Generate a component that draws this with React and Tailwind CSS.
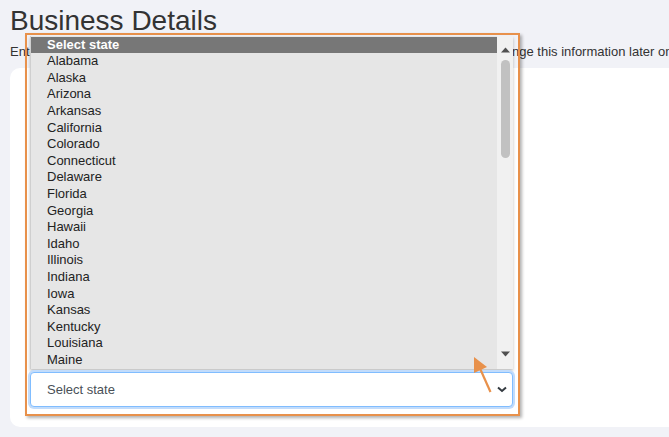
import React from "react";

const states = [
  "Alabama", "Alaska", "Arizona", "Arkansas", "California", "Colorado", "Connecticut",
  "Delaware", "Florida", "Georgia", "Hawaii", "Idaho", "Illinois", "Indiana", "Iowa",
  "Kansas", "Kentucky", "Louisiana", "Maine", "Maryland", "Massachusetts", "Michigan",
];

const App = () => {
  return (
    <div className="relative w-[669px] h-[437px] overflow-hidden bg-[#f1f2f7] font-['Liberation_Sans',Arial,sans-serif] text-[#333]">
      <h1 className="ml-[10px] mt-[7px] text-[28px] leading-[28px] text-[#333]">Business Details</h1>
      <p className="ml-[10px] mt-[9px] text-[13px] leading-[16px] whitespace-nowrap text-[#333]">
        Enter the details of your business below. This will appear on your invoices. You can change this information later on.
      </p>
      <div className="ml-[10px] mt-[8px] w-[700px] h-[359px] rounded-[10px] bg-white" />

      {/* annotated dropdown */}
      <div className="absolute left-[25px] top-[33px] w-[495px] h-[383px] border-2 border-[#e8914b] shadow-[2px_2px_3px_rgba(0,0,0,0.3)]" />

      <div className="absolute left-[30px] top-[36px] w-[483px] h-[333px] flex bg-[#e6e6e6] border-l border-[#cfcfcf] shadow-[0_2px_3px_rgba(0,0,0,0.25)] text-[13px] text-[#222]">
        <ul className="flex-1 overflow-hidden pt-[0.6px]">
          <li className="h-[16.6px] leading-[16.6px] pl-[16px] bg-[#777] text-white font-bold">Select state</li>
          {states.map((s) => (
            <li key={s} className="h-[16.6px] leading-[16.6px] pl-[16px]">
              {s}
            </li>
          ))}
        </ul>
        <div className="w-[16px] bg-[#f1f1f1] flex flex-col items-center">
          <svg width="9" height="6" viewBox="0 0 9 6" className="mt-[11px]">
            <path d="M0 5.5 L4.5 0.5 L9 5.5 Z" fill="#505050" />
          </svg>
          <div className="mt-[7px] w-[9px] h-[98px] rounded-full bg-[#c1c1c1]" />
          <div className="flex-1" />
          <svg width="9" height="6" viewBox="0 0 9 6" className="mb-[12px]">
            <path d="M0 0.5 L9 0.5 L4.5 5.5 Z" fill="#505050" />
          </svg>
        </div>
      </div>

      <div className="absolute left-[30px] top-[372px] w-[483px] h-[35px] flex items-center justify-between bg-white border border-[#80bdff] rounded-[4px] shadow-[0_0_0_2px_#c2dcfb] pl-[16px] pr-[5px] text-[13px] text-[#495057]">
        <span>Select state</span>
        <svg width="10" height="7" viewBox="0 0 10 7">
          <path d="M1 1.5 L5 5 L9 1.5" stroke="#343a40" strokeWidth="2" fill="none" />
        </svg>
      </div>

      <svg className="absolute left-[465px] top-[350px]" width="35" height="50" viewBox="0 0 35 50">
        <line x1="25.5" y1="42" x2="13" y2="14" stroke="#e8914b" strokeWidth="2.2" />
        <path d="M9 7 L9 23 L22 17 Z" fill="#e8914b" />
      </svg>
    </div>
  );
};

export default App;
